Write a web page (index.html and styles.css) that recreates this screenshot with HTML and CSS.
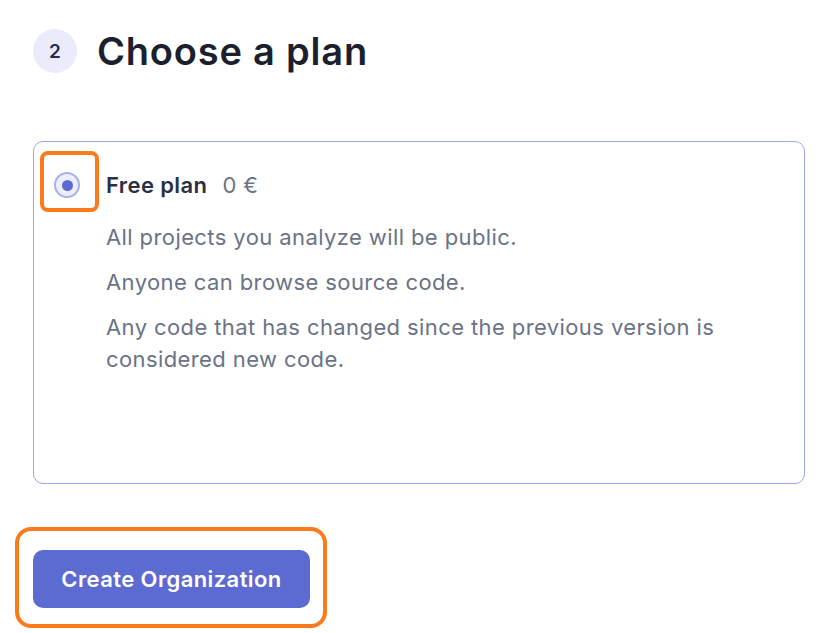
FILE: index.html
```html
<!DOCTYPE html>
<html lang="en">
<head>
<meta charset="utf-8">
<title>Choose a plan</title>
<link rel="stylesheet" href="styles.css">
</head>
<body>
<main class="page">
  <header class="step-header">
    <span class="step-num">2</span>
    <h1 class="step-title">Choose a plan</h1>
  </header>

  <section class="plan-card">
    <div class="plan-head">
      <span class="radio annotated-radio"><span class="radio-dot"></span></span>
      <span class="plan-name">Free plan</span>
      <span class="plan-price">0 €</span>
    </div>
    <div class="plan-body">
      <p>All projects you analyze will be public.</p>
      <p>Anyone can browse source code.</p>
      <p>Any code that has changed since the previous version is considered new code.</p>
    </div>
  </section>

  <div class="actions">
    <div class="annotated-btn">
      <button class="btn-primary" type="button">Create Organization</button>
    </div>
  </div>
</main>
</body>
</html>
```

FILE: styles.css
```css
* { box-sizing: border-box; }
html, body { margin: 0; padding: 0; background: #ffffff; }
body {
  font-family: Inter, "Noto Sans", "Liberation Sans", sans-serif;
  color: #1b1f2e;
}
.page {
  padding: 29px 16px 25px 33px;
}
.step-header {
  display: flex;
  align-items: center;
  gap: 20px;
  height: 44px;
}
.step-num {
  width: 44px;
  height: 44px;
  border-radius: 50%;
  background: #ebecfb;
  color: #262b50;
  font-size: 19px;
  font-weight: 600;
  display: flex;
  align-items: center;
  justify-content: center;
  flex: none;
}
.step-title {
  margin: 0;
  font-size: 38px;
  font-weight: 600;
  letter-spacing: 0.8px;
  color: #1b1f2e;
}
.plan-card {
  margin-top: 68px;
  width: 772px;
  height: 343px;
  border: 1.5px solid #9ea6e6;
  border-radius: 10px;
  padding: 27px 20px 20px 20px;
}
.plan-head {
  display: flex;
  align-items: center;
  height: 32px;
}
.radio {
  position: relative;
  width: 26px;
  height: 26px;
  border-radius: 50%;
  border: 2px solid #a9b0ea;
  background: #eceefc;
  display: flex;
  align-items: center;
  justify-content: center;
  flex: none;
  margin-right: 26px;
}
.radio-dot {
  width: 11px;
  height: 11px;
  border-radius: 50%;
  background: #5c6bd2;
}
.annotated-radio::after {
  content: "";
  position: absolute;
  left: -16px;
  top: -23px;
  width: 59px;
  height: 61px;
  border: 4px solid #f97b1e;
  border-radius: 8px;
  box-sizing: border-box;
}
.plan-name {
  font-size: 22px;
  font-weight: 600;
  letter-spacing: 0.4px;
  color: #2b3043;
}
.plan-price {
  margin-left: 15px;
  font-size: 22px;
  letter-spacing: 0.4px;
  color: #6b7386;
}
.plan-body {
  padding-left: 52px;
  margin-top: 20px;
  color: #6b7386;
  font-size: 22px;
  letter-spacing: 0.4px;
  line-height: 32px;
}
.plan-body p {
  margin: 0 0 13px 0;
  max-width: 650px;
}
.actions {
  margin-top: 66px;
  display: flex;
}
.annotated-btn {
  position: relative;
  display: flex;
}
.annotated-btn::after {
  content: "";
  position: absolute;
  left: -18px;
  top: -23px;
  right: -17px;
  bottom: -20px;
  border: 4px solid #f97b1e;
  border-radius: 16px;
  pointer-events: none;
}
.btn-primary {
  height: 58px;
  width: 277px;
  padding: 0;
  border: none;
  border-radius: 10px;
  background: #5c6bd2;
  color: #ffffff;
  font-family: Inter, "Noto Sans", "Liberation Sans", sans-serif;
  font-size: 22px;
  font-weight: 600;
  letter-spacing: 0.4px;
}
```
